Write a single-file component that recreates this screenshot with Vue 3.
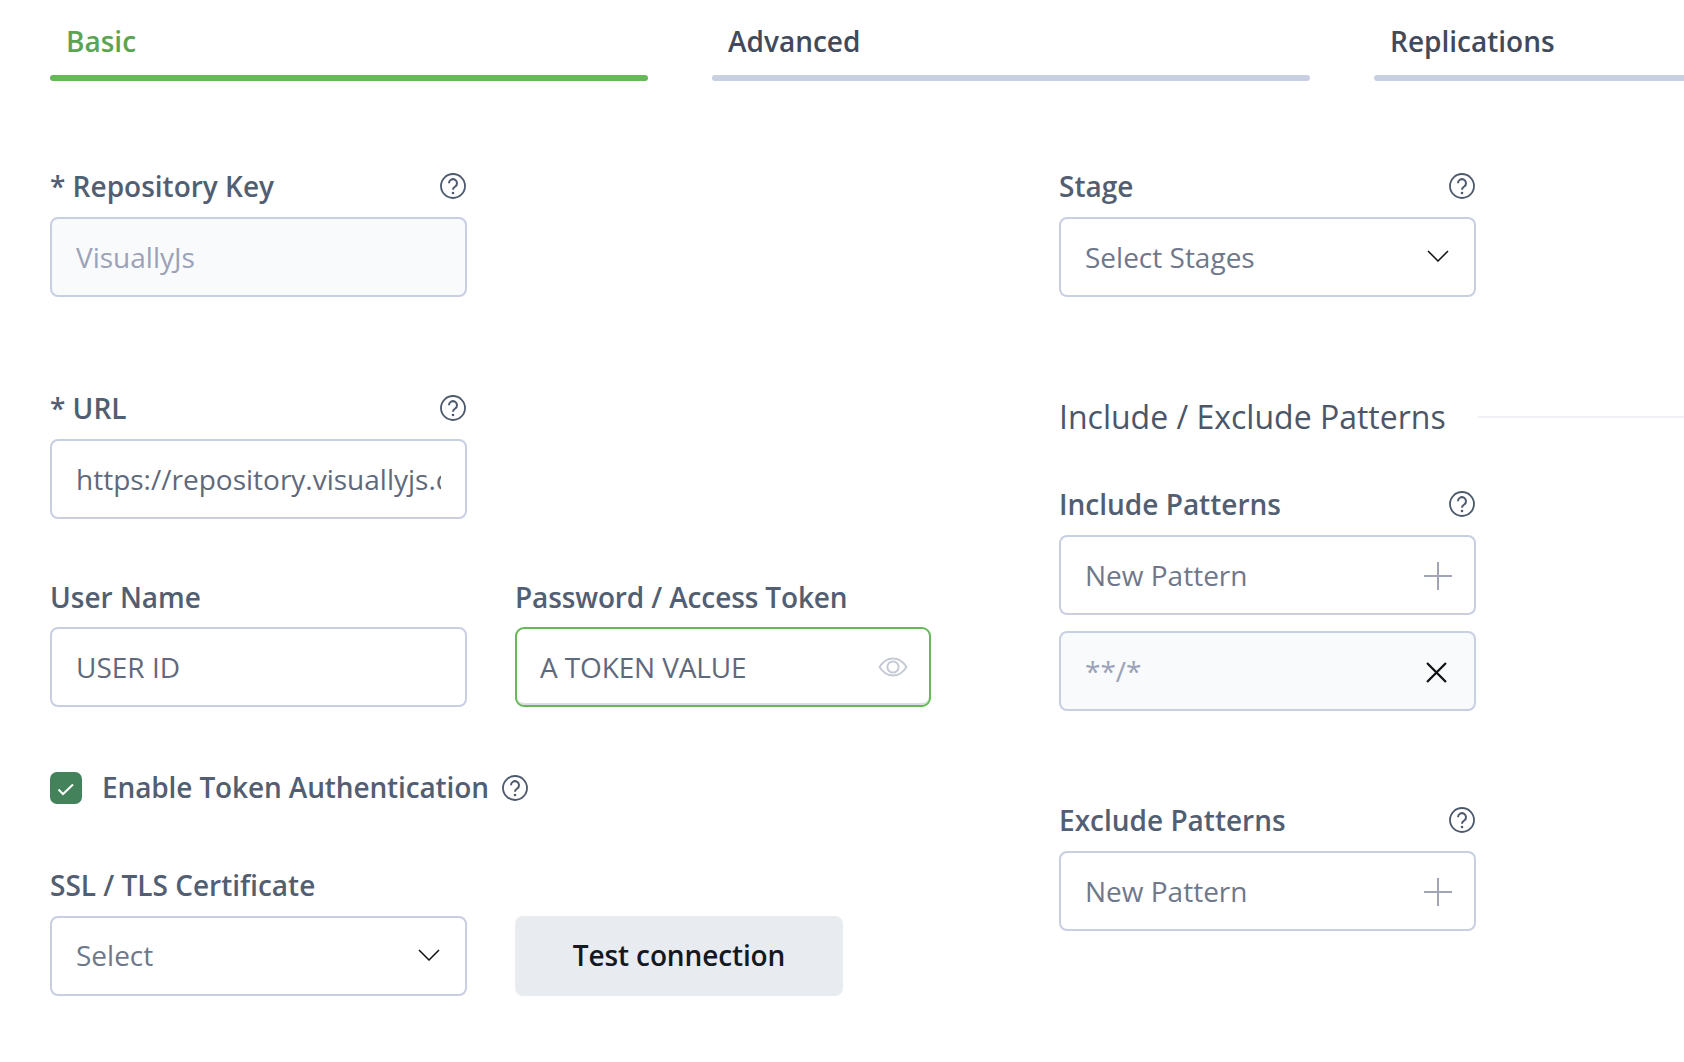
<template>
  <div class="page">
    <svg class="icon-defs" aria-hidden="true">
      <symbol id="help" viewBox="0 0 26 26">
        <circle cx="13" cy="13" r="12" fill="none" stroke="currentColor" stroke-width="1.8" />
        <path d="M9 10.200a4 4 0 1 1 6.200 3.300c-1.400.9-2.200 1.600-2.200 3.200" fill="none" stroke="currentColor" stroke-width="2" />
        <circle cx="13" cy="20" r="1.300" fill="currentColor" />
      </symbol>
      <symbol id="chevron" viewBox="0 0 22 12">
        <path d="M1 1l10 10L21 1" fill="none" stroke="currentColor" stroke-width="1.500" />
      </symbol>
      <symbol id="plus" viewBox="0 0 28 28">
        <path d="M14 0v28M0 14h28" fill="none" stroke="currentColor" stroke-width="2" />
      </symbol>
    </svg>

    <nav class="tabs">
      <div v-for="tab in tabs" :key="tab" class="tab" :class="{ active: tab === 'Basic' }">
        <span class="tab-name">{{ tab }}</span>
        <div class="tab-bar"></div>
      </div>
    </nav>

    <div class="form">
      <section class="left-col">
        <div class="field">
          <div class="label-row">
            <label>* Repository Key</label>
            <svg class="help"><use href="#help" /></svg>
          </div>
          <div class="box disabled"><input value="VisuallyJs" readonly /></div>
        </div>

        <div class="field url-field">
          <div class="label-row">
            <label>* URL</label>
            <svg class="help"><use href="#help" /></svg>
          </div>
          <div class="box"><input value="https://repository.visuallyjs.com/artifactory" readonly /></div>
        </div>

        <div class="creds">
          <div class="field">
            <div class="label-row tight"><label>User Name</label></div>
            <div class="box"><input value="USER ID" readonly /></div>
          </div>
          <div class="field">
            <div class="label-row tight"><label class="snug">Password / Access Token</label></div>
            <div class="box focused">
              <input class="snug" value="A TOKEN VALUE" readonly />
              <svg class="eye" viewBox="0 0 30 20">
                <path d="M1.500 10C5 4.500 9.600 1.500 15 1.500S25 4.500 28.500 10C25 15.500 20.400 18.500 15 18.500S5 15.500 1.500 10z" fill="none" stroke="currentColor" stroke-width="2" />
                <circle cx="15" cy="10" r="5.600" fill="none" stroke="currentColor" stroke-width="2" />
              </svg>
            </div>
          </div>
        </div>

        <div class="check-row">
          <span class="check">
            <svg viewBox="0 0 32 32"><path d="M8.500 17.500l4.500 4.500 10-9.500" fill="none" stroke="#fff" stroke-width="2" /></svg>
          </span>
          <span class="check-text snug">Enable Token Authentication</span>
          <svg class="help"><use href="#help" /></svg>
        </div>

        <div class="creds cert">
          <div class="field">
            <div class="label-row"><label>SSL / TLS Certificate</label></div>
            <div class="box select">
              <span>Select</span>
              <svg class="chevron"><use href="#chevron" /></svg>
            </div>
          </div>
          <button class="test-btn"><span class="snug">Test connection</span></button>
        </div>
      </section>

      <section class="right-col">
        <div class="field narrow">
          <div class="label-row">
            <label>Stage</label>
            <svg class="help"><use href="#help" /></svg>
          </div>
          <div class="box select">
            <span>Select Stages</span>
            <svg class="chevron"><use href="#chevron" /></svg>
          </div>
        </div>

        <div class="section-title">
          <h3>Include / Exclude Patterns</h3>
          <div class="rule"></div>
        </div>

        <div class="field narrow">
          <div class="label-row">
            <label>Include Patterns</label>
            <svg class="help"><use href="#help" /></svg>
          </div>
          <div class="box">
            <input placeholder="New Pattern" readonly />
            <svg class="plus"><use href="#plus" /></svg>
          </div>
          <div class="box disabled pattern">
            <input value="**/*" readonly />
            <svg class="close" viewBox="0 0 20 20">
              <path d="M1 1l18 18M19 1L1 19" fill="none" stroke="currentColor" stroke-width="2.200" />
            </svg>
          </div>
        </div>

        <div class="field narrow exclude">
          <div class="label-row">
            <label>Exclude Patterns</label>
            <svg class="help"><use href="#help" /></svg>
          </div>
          <div class="box">
            <input placeholder="New Pattern" readonly />
            <svg class="plus"><use href="#plus" /></svg>
          </div>
        </div>
      </section>
    </div>
  </div>
</template>

<script setup>
  const tabs = ['Basic', 'Advanced', 'Replications'];
</script>

<style>
  html, body {
    margin: 0;
    background: #ffffff;
    overflow: hidden;
  }
</style>

<style scoped>
  .page {
    width: 1684px;
    height: 1062px;
    overflow: hidden;
    box-sizing: border-box;
    padding-left: 50px;
    font-family: "Open Sans", "Liberation Sans", sans-serif;
    font-size: 28px;
    color: #525e71;
    background: #ffffff;
  }

  .icon-defs {
    position: absolute;
    width: 0;
    height: 0;
  }

  /* --- Tabs --- */
  .tabs {
    display: flex;
    gap: 64px;
    padding-top: 22px;
  }

  .tab {
    flex: 0 0 598px;
  }

  .tab-name {
    display: block;
    padding-left: 16px;
    line-height: 38px;
    font-weight: 600;
    color: #414a5b;
  }

  .tab-bar {
    height: 6px;
    margin-top: 15px;
    border-radius: 3px;
    background: #c9cfe3;
  }

  .tab.active .tab-name {
    color: #5ba552;
  }

  .tab.active .tab-bar {
    background: #65b956;
  }

  /* --- Form layout --- */
  .form {
    display: flex;
    gap: 128px;
    padding-top: 86px;
  }

  .left-col {
    flex: 0 0 881px;
  }

  .right-col {
    flex: 1;
  }

  .narrow,
  .left-col > .field {
    width: 417px;
  }

  .url-field {
    margin-top: 92px;
  }

  .url-field .box {
    padding-right: 24px;
  }

  .creds {
    display: grid;
    grid-template-columns: 417px 416px;
    gap: 48px;
    margin-top: 59px;
  }

  .cert {
    align-items: end;
    margin-top: 61px;
  }

  .cert .select span {
    margin-top: -2px;
  }

  /* Ref text has tighter kerning on "To" / "Te" pairs */
  .snug {
    letter-spacing: -0.13px;
  }

  /* --- Fields --- */
  .label-row {
    display: flex;
    align-items: center;
    justify-content: space-between;
    height: 38px;
    margin-bottom: 12px;
  }

  .label-row.tight {
    margin-bottom: 11px;
  }

  label {
    font-weight: 600;
  }

  .help {
    width: 26px;
    height: 26px;
    flex: none;
    margin-right: 1px;
    color: #4d596d;
  }

  .box {
    display: flex;
    align-items: center;
    justify-content: space-between;
    box-sizing: border-box;
    height: 80px;
    padding: 0 26px 0 24px;
    border: 2px solid #c9cfe3;
    border-radius: 8px;
    background: #ffffff;
  }

  .box input {
    flex: 1;
    min-width: 0;
    padding: 0;
    border: none;
    outline: none;
    background: transparent;
    font: inherit;
    color: #5f697c;
  }

  .box input.snug {
    letter-spacing: -0.13px;
  }

  .box input::placeholder {
    color: #6f788b;
    opacity: 1;
  }

  .box.disabled {
    background: #f8fafc;
  }

  .box.disabled input {
    color: #9ba2b8;
  }

  .box.focused {
    padding-left: 23px;
    border-color: #65b956;
    border-radius: 9px;
    box-shadow: inset 0 -2px 0 #dcdde3;
  }

  .select {
    color: #6f788b;
  }

  .pattern {
    margin-top: 16px;
  }

  .eye {
    width: 30px;
    height: 20px;
    flex: none;
    margin-left: 8px;
    margin-right: -5px;
    color: #c6cad5;
  }

  .chevron {
    width: 22px;
    height: 12px;
    flex: none;
    margin-top: -2px;
    margin-right: -1px;
    color: #111111;
  }

  .plus {
    width: 28px;
    height: 28px;
    flex: none;
    margin-top: 2px;
    margin-right: -4px;
    color: #a0a5b7;
  }

  .close {
    width: 21px;
    height: 21px;
    flex: none;
    margin-top: 3px;
    margin-right: 1px;
    color: #111111;
  }

  /* --- Checkbox row --- */
  .check-row {
    display: flex;
    align-items: center;
    height: 34px;
    margin-top: 64px;
  }

  .check {
    width: 32px;
    height: 32px;
    flex: none;
    border-radius: 7px;
    background: #43825a;
  }

  .check svg {
    display: block;
    width: 32px;
    height: 32px;
  }

  .check-text {
    margin-top: -2px;
    margin-left: 20px;
    margin-right: 13px;
    font-weight: 600;
  }

  /* --- Button --- */
  .test-btn {
    width: 328px;
    height: 80px;
    padding: 0 0 2px;
    border: none;
    border-radius: 8px;
    background: #e8ebf0;
    font: inherit;
    font-weight: 600;
    color: #14181f;
  }

  /* --- Section title --- */
  .section-title {
    display: flex;
    align-items: center;
    gap: 32px;
    margin-top: 97px;
    height: 44px;
  }

  .section-title h3 {
    margin: 0;
    font-size: 32px;
    font-weight: 400;
    color: #4b5668;
  }

  .rule {
    flex: 1;
    height: 2px;
    margin-top: 1px;
    background: #f0f1f5;
  }

  .section-title + .field {
    margin-top: 47px;
  }

  .exclude {
    margin-top: 90px;
  }
</style>
